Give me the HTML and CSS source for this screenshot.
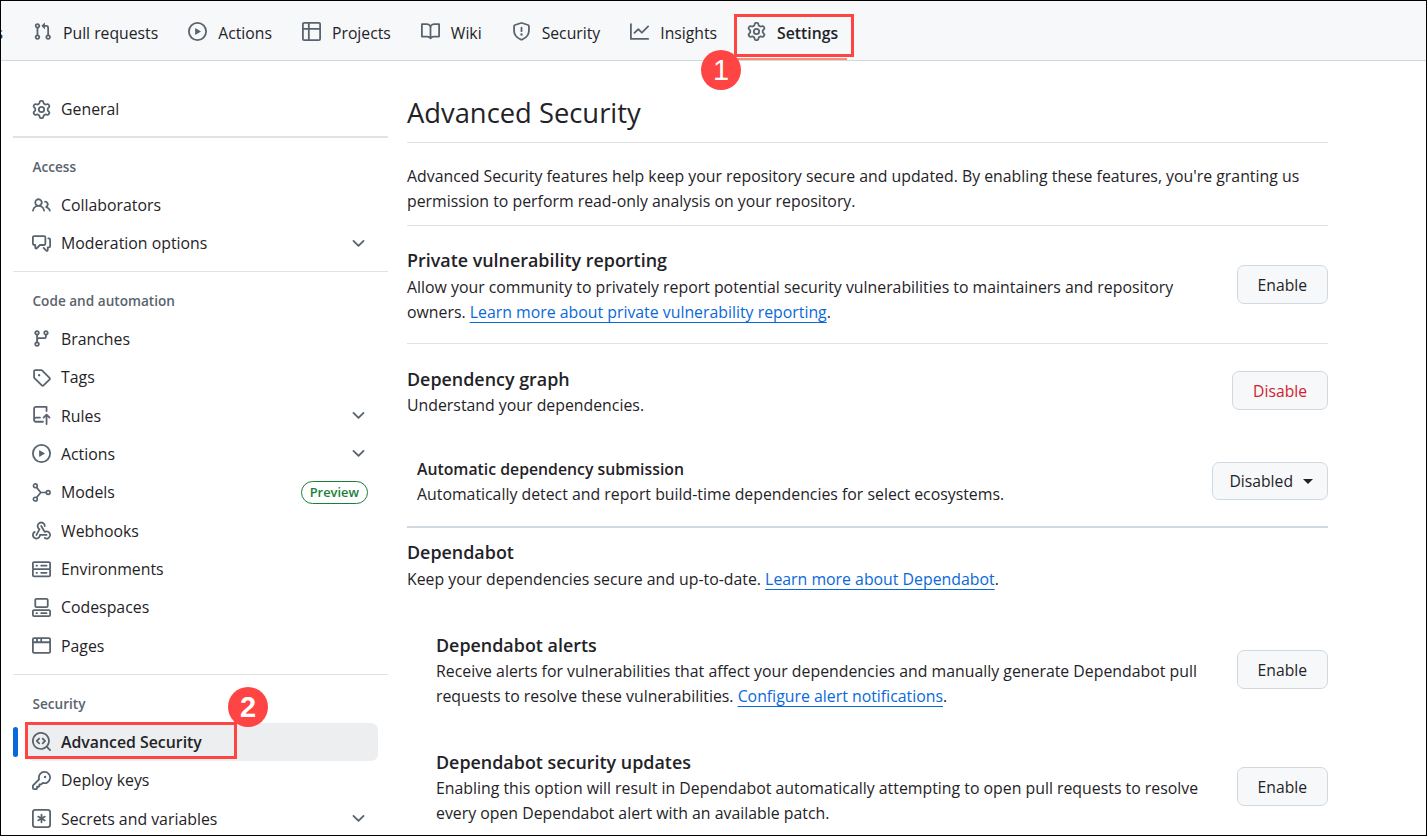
FILE: index.html
```html
<!DOCTYPE html>
<html lang="en">
<head>
  <meta charset="UTF-8">
  <meta name="viewport" content="width=device-width, initial-scale=1.0">
  <title>Advanced Security</title>
  <link rel="stylesheet" href="styles.css">
</head>
<body>
  <svg class="sprite" xmlns="http://www.w3.org/2000/svg">
    <symbol id="i-pull" viewBox="0 0 16 16"><path d="M1.5 3.25a2.25 2.25 0 1 1 3 2.122v5.256a2.251 2.251 0 1 1-1.5 0V5.372A2.25 2.25 0 0 1 1.5 3.25Zm5.677-.177L9.573.677A.25.25 0 0 1 10 .854V2.5h1A2.5 2.5 0 0 1 13.5 5v5.628a2.251 2.251 0 1 1-1.5 0V5a1 1 0 0 0-1-1h-1v1.646a.25.25 0 0 1-.427.177L7.177 3.427a.25.25 0 0 1 0-.354ZM3.75 2.5a.75.75 0 1 0 0 1.5.75.75 0 0 0 0-1.5Zm0 9.5a.75.75 0 1 0 0 1.5.75.75 0 0 0 0-1.5Zm8.25.75a.75.75 0 1 0 1.5 0 .75.75 0 0 0-1.5 0Z"/></symbol>
    <symbol id="i-play" viewBox="0 0 16 16"><path d="M8 0a8 8 0 1 1 0 16A8 8 0 0 1 8 0ZM1.5 8a6.5 6.5 0 1 0 13 0 6.5 6.5 0 0 0-13 0Zm4.879-2.773 4.264 2.559a.25.25 0 0 1 0 .428l-4.264 2.559A.25.25 0 0 1 6 10.559V5.442a.25.25 0 0 1 .379-.215Z"/></symbol>
    <symbol id="i-table" viewBox="0 0 16 16"><path d="M0 1.75C0 .784.784 0 1.75 0h12.5C15.216 0 16 .784 16 1.75v12.5A1.75 1.75 0 0 1 14.25 16H1.75A1.75 1.75 0 0 1 0 14.25ZM6.5 6.5v8h7.75a.25.25 0 0 0 .25-.25V6.5Zm8-1.5V1.75a.25.25 0 0 0-.25-.25H6.5V5Zm-13 1.5v7.75c0 .138.112.25.25.25H5v-8ZM5 5V1.5H1.75a.25.25 0 0 0-.25.25V5Z"/></symbol>
    <symbol id="i-book" viewBox="0 0 16 16"><path d="M0 1.75A.75.75 0 0 1 .75 1h4.253c1.227 0 2.317.59 3 1.501A3.743 3.743 0 0 1 11.006 1h4.245a.75.75 0 0 1 .75.75v10.5a.75.75 0 0 1-.75.75h-4.507a2.25 2.25 0 0 0-1.591.659l-.622.621a.75.75 0 0 1-1.06 0l-.622-.621A2.25 2.25 0 0 0 5.258 13H.75a.75.75 0 0 1-.75-.75Zm7.251 10.324.004-5.073-.002-2.253A2.25 2.25 0 0 0 5.003 2.5H1.5v9h3.757a3.75 3.75 0 0 1 1.994.574ZM8.755 4.75l-.004 7.322a3.752 3.752 0 0 1 1.992-.572H14.5v-9h-3.495a2.25 2.25 0 0 0-2.25 2.25Z"/></symbol>
    <symbol id="i-shield" viewBox="0 0 16 16"><path d="M7.467.133a1.748 1.748 0 0 1 1.066 0l5.25 1.68A1.75 1.75 0 0 1 15 3.48V7c0 1.566-.32 3.182-1.303 4.682-.983 1.498-2.585 2.813-5.032 3.855a1.697 1.697 0 0 1-1.33 0c-2.447-1.042-4.049-2.357-5.032-3.855C1.32 10.182 1 8.566 1 7V3.48a1.75 1.75 0 0 1 1.217-1.667Zm.61 1.429a.25.25 0 0 0-.153 0l-5.25 1.68a.25.25 0 0 0-.174.238V7c0 1.358.275 2.666 1.057 3.86.784 1.194 2.121 2.34 4.366 3.297a.196.196 0 0 0 .154 0c2.245-.956 3.582-2.104 4.366-3.298C13.225 9.666 13.5 8.36 13.5 7V3.48a.251.251 0 0 0-.174-.237l-5.25-1.68ZM8.75 4.75v3a.75.75 0 0 1-1.5 0v-3a.75.75 0 0 1 1.5 0ZM9 10.5a1 1 0 1 1-2 0 1 1 0 0 1 2 0Z"/></symbol>
    <symbol id="i-graph" viewBox="0 0 16 16"><path d="M1.5 1.75V13.5h13.75a.75.75 0 0 1 0 1.5H.75a.75.75 0 0 1-.75-.75V1.75a.75.75 0 0 1 1.5 0Zm14.28 2.53-5.25 5.25a.75.75 0 0 1-1.06 0L7 7.06 4.28 9.78a.751.751 0 0 1-1.042-.018.751.751 0 0 1-.018-1.042l3.25-3.25a.75.75 0 0 1 1.06 0L10 7.94l4.72-4.72a.751.751 0 0 1 1.042.018.751.751 0 0 1 .018 1.042Z"/></symbol>
    <symbol id="i-gear" viewBox="0 0 16 16"><path d="M8 0a8.2 8.2 0 0 1 .701.031C9.444.095 9.99.645 10.16 1.29l.288 1.107c.018.066.079.158.212.224.231.114.454.243.668.386.123.082.233.09.299.071l1.103-.303c.644-.176 1.392.021 1.82.63.27.385.506.792.704 1.218.315.675.111 1.422-.364 1.891l-.814.806c-.049.048-.098.147-.088.294.016.257.016.515 0 .772-.01.147.038.246.088.294l.814.806c.475.469.679 1.216.364 1.891a7.977 7.977 0 0 1-.704 1.217c-.428.61-1.176.807-1.82.63l-1.102-.302c-.067-.019-.177-.011-.3.071a5.909 5.909 0 0 1-.668.386c-.133.066-.194.158-.211.224l-.29 1.106c-.168.646-.715 1.196-1.458 1.26a8.006 8.006 0 0 1-1.402 0c-.743-.064-1.289-.614-1.458-1.26l-.289-1.106c-.018-.066-.079-.158-.212-.224a5.738 5.738 0 0 1-.668-.386c-.123-.082-.233-.09-.299-.071l-1.103.303c-.644.176-1.392-.021-1.82-.63a8.12 8.12 0 0 1-.704-1.218c-.315-.675-.111-1.422.363-1.891l.815-.806c.05-.048.098-.147.088-.294a6.214 6.214 0 0 1 0-.772c.01-.147-.038-.246-.088-.294l-.815-.806C.635 6.045.431 5.298.746 4.623a7.92 7.92 0 0 1 .704-1.217c.428-.61 1.176-.807 1.82-.63l1.102.302c.067.019.177.011.3-.071.214-.143.437-.272.668-.386.133-.066.194-.158.211-.224l.29-1.106C6.009.645 6.556.095 7.299.03 7.53.01 7.764 0 8 0Zm-.571 1.525c-.036.003-.108.036-.137.146l-.289 1.105c-.147.561-.549.967-.998 1.189-.173.086-.34.183-.5.29-.417.278-.97.423-1.529.27l-1.103-.303c-.109-.03-.175.016-.195.045-.22.312-.412.644-.573.99-.014.031-.021.11.059.19l.815.806c.411.406.562.957.53 1.456a4.709 4.709 0 0 0 0 .582c.032.499-.119 1.05-.53 1.456l-.815.806c-.081.08-.073.159-.059.19.162.346.353.677.573.989.02.03.085.076.195.046l1.102-.303c.56-.153 1.113-.008 1.53.27.161.107.328.204.501.29.447.222.85.629.997 1.189l.289 1.105c.029.109.101.143.137.146a6.6 6.6 0 0 0 1.142 0c.036-.003.108-.036.137-.146l.289-1.105c.147-.561.549-.967.998-1.189.173-.086.34-.183.5-.29.417-.278.97-.423 1.529-.27l1.103.303c.109.029.175-.016.195-.045.22-.313.411-.644.573-.99.014-.031.021-.11-.059-.19l-.815-.806c-.411-.406-.562-.957-.53-1.456a4.709 4.709 0 0 0 0-.582c-.032-.499.119-1.05.53-1.456l.815-.806c.081-.08.073-.159.059-.19a6.464 6.464 0 0 0-.573-.989c-.02-.03-.085-.076-.195-.046l-1.102.303c-.56.153-1.113.008-1.53-.27a4.44 4.44 0 0 0-.501-.29c-.447-.222-.85-.629-.997-1.189l-.289-1.105c-.029-.11-.101-.143-.137-.146a6.6 6.6 0 0 0-1.142 0ZM11 8a3 3 0 1 1-6 0 3 3 0 0 1 6 0ZM9.5 8a1.5 1.5 0 1 0-3.001.001A1.5 1.5 0 0 0 9.5 8Z"/></symbol>
    <symbol id="i-people" viewBox="0 0 16 16"><path d="M2 5.5a3.5 3.5 0 1 1 5.898 2.549 5.508 5.508 0 0 1 3.034 4.084.75.75 0 1 1-1.482.235 4 4 0 0 0-7.9 0 .75.75 0 0 1-1.482-.236A5.507 5.507 0 0 1 3.102 8.05 3.493 3.493 0 0 1 2 5.5ZM11 4a3.001 3.001 0 0 1 2.22 5.018 5.01 5.01 0 0 1 2.56 3.012.749.749 0 0 1-.885.954.752.752 0 0 1-.549-.514 3.507 3.507 0 0 0-2.522-2.372.75.75 0 0 1-.574-.73v-.352a.75.75 0 0 1 .416-.672A1.5 1.5 0 0 0 11 5.5.75.75 0 0 1 11 4Zm-5.5-.5a2 2 0 1 0-.001 3.999A2 2 0 0 0 5.5 3.5Z"/></symbol>
    <symbol id="i-comments" viewBox="0 0 16 16"><path d="M1.75 1h8.5c.966 0 1.75.784 1.75 1.75v5.5A1.75 1.75 0 0 1 10.25 10H7.061l-2.574 2.573A1.458 1.458 0 0 1 2 11.543V10h-.25A1.75 1.75 0 0 1 0 8.25v-5.5C0 1.784.784 1 1.75 1ZM1.5 2.75v5.5c0 .138.112.25.25.25h1a.75.75 0 0 1 .75.75v2.19l2.72-2.72a.749.749 0 0 1 .53-.22h3.5a.25.25 0 0 0 .25-.25v-5.5a.25.25 0 0 0-.25-.25h-8.5a.25.25 0 0 0-.25.25Zm13 2a.25.25 0 0 0-.25-.25h-.5a.75.75 0 0 1 0-1.5h.5c.966 0 1.75.784 1.75 1.75v5.5A1.75 1.75 0 0 1 14.25 12H14v1.543a1.458 1.458 0 0 1-2.487 1.03L9.22 12.28a.749.749 0 0 1 .326-1.275.749.749 0 0 1 .734.215l2.22 2.22v-2.19a.75.75 0 0 1 .75-.75h1a.25.25 0 0 0 .25-.25Z"/></symbol>
    <symbol id="i-chevron" viewBox="0 0 16 16"><path d="M12.78 5.22a.749.749 0 0 1 0 1.06l-4.25 4.25a.749.749 0 0 1-1.06 0L3.22 6.28a.749.749 0 1 1 1.06-1.06L8 8.939l3.72-3.719a.749.749 0 0 1 1.06 0Z"/></symbol>
    <symbol id="i-branch" viewBox="0 0 16 16"><path d="M9.5 3.25a2.25 2.25 0 1 1 3 2.122V6A2.5 2.5 0 0 1 10 8.5H6a1 1 0 0 0-1 1v1.128a2.251 2.251 0 1 1-1.5 0V5.372a2.25 2.25 0 1 1 1.5 0v1.836A2.493 2.493 0 0 1 6 7h4a1 1 0 0 0 1-1v-.628A2.25 2.25 0 0 1 9.5 3.25Zm-6 0a.75.75 0 1 0 1.5 0 .75.75 0 0 0-1.5 0Zm8.25-.75a.75.75 0 1 0 0 1.5.75.75 0 0 0 0-1.5ZM4.25 12a.75.75 0 1 0 0 1.5.75.75 0 0 0 0-1.5Z"/></symbol>
    <symbol id="i-tag" viewBox="0 0 16 16"><path d="M1 7.775V2.75C1 1.784 1.784 1 2.75 1h5.025c.464 0 .91.184 1.238.513l6.25 6.25a1.75 1.75 0 0 1 0 2.474l-5.026 5.026a1.75 1.75 0 0 1-2.474 0l-6.25-6.25A1.75 1.75 0 0 1 1 7.775Zm1.5 0c0 .066.026.13.073.177l6.25 6.25a.25.25 0 0 0 .354 0l5.025-5.025a.25.25 0 0 0 0-.354l-6.25-6.25a.25.25 0 0 0-.177-.073H2.75a.25.25 0 0 0-.25.25ZM6 5a1 1 0 1 1 0 2 1 1 0 0 1 0-2Z"/></symbol>
    <symbol id="i-rules" viewBox="0 0 16 16"><path d="M1 2.5A2.5 2.5 0 0 1 3.5 0h8.75a.75.75 0 0 1 .75.75v3.5a.75.75 0 0 1-1.5 0V1.5h-8a1 1 0 0 0-1 1v6.708A2.493 2.493 0 0 1 3.5 9h3.25a.75.75 0 0 1 0 1.5H3.5a1 1 0 0 0 0 2h5.75a.75.75 0 0 1 0 1.5H3.5A2.5 2.5 0 0 1 1 11.5Zm13.23 7.79h-.001l-1.224-1.224v6.184a.75.75 0 0 1-1.5 0V9.066L10.28 10.29a.75.75 0 0 1-1.06-1.061l2.505-2.504a.75.75 0 0 1 1.06 0L15.29 9.23a.751.751 0 0 1-.018 1.042.751.751 0 0 1-1.042.018Z"/></symbol>
    <symbol id="i-models" viewBox="0 0 16 16"><g fill="none" stroke="currentColor" stroke-width="1.4"><circle cx="2.8" cy="2.4" r="1.6"/><circle cx="2.8" cy="13.6" r="1.6"/><circle cx="13.6" cy="8" r="1.6"/><path d="M3.8 3.7 7.4 8l-3.6 4.3M7.4 8H12"/></g></symbol>
    <symbol id="i-webhook" viewBox="0 0 16 16"><path d="M5.5 4.25a2.25 2.25 0 0 1 4.5 0 .75.75 0 0 0 1.5 0 3.75 3.75 0 1 0-6.14 2.889l-2.272 4.258a.75.75 0 0 0 1.324.706L7 7.25a.75.75 0 0 0-.309-1.015A2.25 2.25 0 0 1 5.5 4.25Z"/><path d="M7.364 3.607a.75.75 0 0 1 1.03.257l2.608 4.349a3.75 3.75 0 1 1-.628 6.785.75.75 0 0 1 .752-1.299 2.25 2.25 0 1 0-.033-3.88.75.75 0 0 1-1.03-.256L7.107 4.636a.75.75 0 0 1 .257-1.03Z"/><path d="M2.9 8.776A.75.75 0 0 1 2.625 9.8 2.25 2.25 0 1 0 6 11.75a.75.75 0 0 1 .75-.751h5.5a.75.75 0 0 1 0 1.5H7.425a3.751 3.751 0 1 1-5.55-3.998.75.75 0 0 1 1.024.274Z"/></symbol>
    <symbol id="i-server" viewBox="0 0 16 16"><path d="M1.75 1h12.5c.966 0 1.75.784 1.75 1.75v4c0 .372-.116.717-.314 1 .198.283.314.628.314 1v4a1.75 1.75 0 0 1-1.75 1.75H1.75A1.75 1.75 0 0 1 0 12.75v-4c0-.358.109-.707.314-1a1.739 1.739 0 0 1-.314-1v-4C0 1.784.784 1 1.75 1ZM1.5 2.75v4c0 .138.112.25.25.25h12.5a.25.25 0 0 0 .25-.25v-4a.25.25 0 0 0-.25-.25H1.75a.25.25 0 0 0-.25.25Zm.25 5.75a.25.25 0 0 0-.25.25v4c0 .138.112.25.25.25h12.5a.25.25 0 0 0 .25-.25v-4a.25.25 0 0 0-.25-.25ZM7 4.75A.75.75 0 0 1 7.75 4h4.5a.75.75 0 0 1 0 1.5h-4.5A.75.75 0 0 1 7 4.75ZM7.75 10h4.5a.75.75 0 0 1 0 1.5h-4.5a.75.75 0 0 1 0-1.5ZM3 4.75A.75.75 0 0 1 3.75 4h.5a.75.75 0 0 1 0 1.5h-.5A.75.75 0 0 1 3 4.75ZM3.75 10h.5a.75.75 0 0 1 0 1.5h-.5a.75.75 0 0 1 0-1.5Z"/></symbol>
    <symbol id="i-codespaces" viewBox="0 0 16 16"><path d="M0 11.25c0-.966.784-1.75 1.75-1.75h12.5c.966 0 1.75.784 1.75 1.75v3A1.75 1.75 0 0 1 14.25 16H1.75A1.75 1.75 0 0 1 0 14.25Zm2-9.5C2 .784 2.784 0 3.75 0h8.5C13.216 0 14 .784 14 1.75v5a1.75 1.75 0 0 1-1.75 1.75h-8.5A1.75 1.75 0 0 1 2 6.75Zm1.75-.25a.25.25 0 0 0-.25.25v5c0 .138.112.25.25.25h8.5a.25.25 0 0 0 .25-.25v-5a.25.25 0 0 0-.25-.25Zm-2 9.5a.25.25 0 0 0-.25.25v3c0 .138.112.25.25.25h12.5a.25.25 0 0 0 .25-.25v-3a.25.25 0 0 0-.25-.25Z"/><path d="M7 12.75a.75.75 0 0 1 .75-.75h4.5a.75.75 0 0 1 0 1.5h-4.5a.75.75 0 0 1-.75-.75Zm-4 0a.75.75 0 0 1 .75-.75h.5a.75.75 0 0 1 0 1.5h-.5a.75.75 0 0 1-.75-.75Z"/></symbol>
    <symbol id="i-browser" viewBox="0 0 16 16"><path d="M0 2.75C0 1.784.784 1 1.75 1h12.5c.966 0 1.75.784 1.75 1.75v10.5A1.75 1.75 0 0 1 14.25 15H1.75A1.75 1.75 0 0 1 0 13.25ZM14.5 6h-13v7.25c0 .138.112.25.25.25h12.5a.25.25 0 0 0 .25-.25Zm-6-3.5v2h6V2.75a.25.25 0 0 0-.25-.25ZM5 2.5v2h2v-2Zm-3.25 0a.25.25 0 0 0-.25.25V4.5h2v-2Z"/></symbol>
    <symbol id="i-codescan" viewBox="0 0 16 16"><path d="M8.47 4.97a.75.75 0 0 0 0 1.06L9.94 7.5 8.47 8.97a.75.75 0 1 0 1.06 1.06l2-2a.75.75 0 0 0 0-1.06l-2-2a.75.75 0 0 0-1.06 0ZM6.53 6.03a.75.75 0 0 0-1.06-1.06l-2 2a.75.75 0 0 0 0 1.06l2 2a.75.75 0 1 0 1.06-1.06L5.06 7.5l1.47-1.47Z"/><path d="M12.246 13.307a7.501 7.501 0 1 1 1.06-1.06l2.474 2.473a.749.749 0 0 1-.326 1.275.749.749 0 0 1-.734-.215ZM1.5 7.5a6.002 6.002 0 0 0 3.608 5.504 6.002 6.002 0 0 0 6.486-1.117.748.748 0 0 1 .292-.293A6 6 0 1 0 1.5 7.5Z"/></symbol>
    <symbol id="i-key" viewBox="0 0 16 16"><path d="M10.5 0a5.499 5.499 0 1 1-1.288 10.848l-.932.932a.749.749 0 0 1-.53.22H7v.75a.749.749 0 0 1-.22.53l-.5.5a.749.749 0 0 1-.53.22H5v.75a.749.749 0 0 1-.22.53l-.5.5a.749.749 0 0 1-.53.22h-2A1.75 1.75 0 0 1 0 14.25v-2c0-.199.079-.389.22-.53l4.932-4.932A5.5 5.5 0 0 1 10.5 0Zm-4 5.5c-.001.431.069.86.205 1.269a.75.75 0 0 1-.181.768L1.5 12.56v1.69c0 .138.112.25.25.25h1.69l.06-.06v-1.19a.75.75 0 0 1 .75-.75h1.19l.06-.06v-1.19a.75.75 0 0 1 .75-.75h1.19l1.023-1.025a.75.75 0 0 1 .768-.18A4 4 0 1 0 6.5 5.5ZM11 6a1 1 0 1 1 0-2 1 1 0 0 1 0 2Z"/></symbol>
    <symbol id="i-asterisk" viewBox="0 0 16 16"><path d="M0 2.75A2.75 2.75 0 0 1 2.75 0h10.5A2.75 2.75 0 0 1 16 2.75v10.5A2.75 2.75 0 0 1 13.25 16H2.75A2.75 2.75 0 0 1 0 13.25ZM2.75 1.5c-.69 0-1.25.56-1.25 1.25v10.5c0 .69.56 1.25 1.25 1.25h10.5c.69 0 1.25-.56 1.25-1.25V2.75c0-.69-.56-1.25-1.25-1.25Z"/><path d="M8 4a.75.75 0 0 1 .75.75V6.7l1.69-.975a.75.75 0 0 1 .75 1.3L9.5 8l1.69.976a.75.75 0 0 1-.75 1.298L8.75 9.3v1.951a.75.75 0 0 1-1.5 0V9.299l-1.69.975a.75.75 0 0 1-.75-1.298L6.5 8l-1.69-.975a.75.75 0 0 1 .75-1.3l1.69.976V4.75A.75.75 0 0 1 8 4Z"/></symbol>
  </svg>

  <div class="frame">
    <nav class="tabs">
      <span class="tab-cut">s</span>
      <a class="tab"><svg class="icon"><use href="#i-pull"/></svg>Pull requests</a>
      <a class="tab"><svg class="icon"><use href="#i-play"/></svg>Actions</a>
      <a class="tab"><svg class="icon"><use href="#i-table"/></svg>Projects</a>
      <a class="tab"><svg class="icon"><use href="#i-book"/></svg>Wiki</a>
      <a class="tab"><svg class="icon"><use href="#i-shield"/></svg>Security</a>
      <a class="tab"><svg class="icon"><use href="#i-graph"/></svg>Insights</a>
      <a class="tab tab-current"><svg class="icon"><use href="#i-gear"/></svg>Settings</a>
    </nav>

    <div class="layout">
      <aside class="side">
        <ul class="side-list">
          <li class="side-item"><svg class="icon"><use href="#i-gear"/></svg>General</li>
        </ul>
        <div class="side-rule side-rule-first"></div>
        <h3 class="side-head">Access</h3>
        <ul class="side-list">
          <li class="side-item"><svg class="icon"><use href="#i-people"/></svg>Collaborators</li>
          <li class="side-item"><svg class="icon"><use href="#i-comments"/></svg>Moderation options<svg class="icon chevron"><use href="#i-chevron"/></svg></li>
        </ul>
        <div class="side-rule"></div>
        <h3 class="side-head">Code and automation</h3>
        <ul class="side-list">
          <li class="side-item"><svg class="icon"><use href="#i-branch"/></svg>Branches</li>
          <li class="side-item"><svg class="icon"><use href="#i-tag"/></svg>Tags</li>
          <li class="side-item"><svg class="icon"><use href="#i-rules"/></svg>Rules<svg class="icon chevron"><use href="#i-chevron"/></svg></li>
          <li class="side-item"><svg class="icon"><use href="#i-play"/></svg>Actions<svg class="icon chevron"><use href="#i-chevron"/></svg></li>
          <li class="side-item"><svg class="icon"><use href="#i-models"/></svg>Models<span class="pill">Preview</span></li>
          <li class="side-item"><svg class="icon"><use href="#i-webhook"/></svg>Webhooks</li>
          <li class="side-item"><svg class="icon"><use href="#i-server"/></svg>Environments</li>
          <li class="side-item"><svg class="icon"><use href="#i-codespaces"/></svg>Codespaces</li>
          <li class="side-item"><svg class="icon"><use href="#i-browser"/></svg>Pages</li>
        </ul>
        <div class="side-rule side-rule-last"></div>
        <h3 class="side-head">Security</h3>
        <ul class="side-list">
          <li class="side-item side-active"><svg class="icon"><use href="#i-codescan"/></svg>Advanced Security</li>
          <li class="side-item"><svg class="icon"><use href="#i-key"/></svg>Deploy keys</li>
          <li class="side-item"><svg class="icon"><use href="#i-asterisk"/></svg>Secrets and variables<svg class="icon chevron"><use href="#i-chevron"/></svg></li>
        </ul>
      </aside>

      <main class="content">
        <h1 class="page-title">Advanced Security</h1>
        <p class="intro">Advanced Security features help keep your repository secure and updated. By enabling these features, you're granting us<br>permission to perform read-only analysis on your repository.</p>

        <section class="row row-private">
          <div>
            <h2 class="row-title">Private vulnerability reporting</h2>
            <p class="row-text">Allow your community to privately report potential security vulnerabilities to maintainers and repository<br>owners. <a class="link">Learn more about private vulnerability reporting</a>.</p>
          </div>
          <button class="btn btn-enable">Enable</button>
        </section>

        <section class="row row-graph">
          <div>
            <h2 class="row-title">Dependency graph</h2>
            <p class="row-text">Understand your dependencies.</p>
          </div>
          <button class="btn btn-disable">Disable</button>
        </section>

        <section class="row row-submission">
          <div>
            <h2 class="row-title row-title-small">Automatic dependency submission</h2>
            <p class="row-text">Automatically detect and report build-time dependencies for select ecosystems.</p>
          </div>
          <button class="btn btn-menu">Disabled<span class="caret"></span></button>
        </section>

        <section class="dependabot">
          <h2 class="row-title">Dependabot</h2>
          <p class="row-text">Keep your dependencies secure and up-to-date. <a class="link">Learn more about Dependabot</a>.</p>
        </section>

        <section class="row row-alerts">
          <div>
            <h2 class="row-title">Dependabot alerts</h2>
            <p class="row-text">Receive alerts for vulnerabilities that affect your dependencies and manually generate Dependabot pull<br>requests to resolve these vulnerabilities. <a class="link">Configure alert notifications</a>.</p>
          </div>
          <button class="btn btn-enable">Enable</button>
        </section>

        <section class="row row-updates">
          <div>
            <h2 class="row-title">Dependabot security updates</h2>
            <p class="row-text">Enabling this option will result in Dependabot automatically attempting to open pull requests to resolve<br>every open Dependabot alert with an available patch.</p>
          </div>
          <button class="btn btn-enable">Enable</button>
        </section>
      </main>
    </div>

    <!-- callouts drawn over the screenshot -->
    <div class="mark mark-settings"></div>
    <div class="mark mark-advanced"></div>
    <div class="badge badge-one">1</div>
    <div class="badge badge-two">2</div>
  </div>
</body>
</html>
```

FILE: styles.css
```css
* {
  box-sizing: border-box;
}
body {
  margin: 0;
  background: #fff;
  font-family: "Open Sans", "Noto Sans", sans-serif;
  font-size: 15.85px;
  color: #1f2328;
}
.sprite {
  display: none;
}
.icon {
  width: 19px;
  height: 19px;
  flex: none;
  fill: #59636e;
  color: #59636e;
}
.frame {
  position: relative;
  width: 1427px;
  height: 836px;
  border: 1px solid #000;
  overflow: hidden;
}

/* top tabs */
.tabs {
  display: flex;
  align-items: center;
  gap: 30px;
  height: 60px;
  padding-top: 4px;
  background: #f6f8fa;
  border-bottom: 1px solid #d1d9e0;
  font-size: 15.75px;
}
.tab-cut {
  display: flex;
  justify-content: flex-end;
  width: 2px;
  overflow: hidden;
}
.tab {
  position: relative;
  display: flex;
  align-items: center;
  gap: 11px;
  white-space: nowrap;
}
.tab .icon {
  margin-bottom: 3px;
}
.tab-current {
  font-weight: 600;
}
.tab-current::after {
  content: "";
  position: absolute;
  left: -10px;
  right: -9px;
  bottom: -16px;
  height: 2px;
  background: #fd8c73;
}

.layout {
  display: flex;
}

/* sidebar */
.side {
  flex: none;
  width: 375px;
  margin-left: 12px;
  padding-top: 29px;
}
.side-list {
  list-style: none;
  margin: 0 10px 0 14px;
  padding: 0;
}
.side-item {
  position: relative;
  display: flex;
  align-items: center;
  gap: 10px;
  height: 38.4px;
  padding: 0 10px 0 5px;
  border-radius: 7px;
  white-space: nowrap;
}
.side-active {
  background: #eceef0;
  font-weight: 600;
}
.side-active::before {
  content: "";
  position: absolute;
  left: -14px;
  top: 4px;
  width: 5px;
  height: 30px;
  border-radius: 3px;
  background: #0969da;
}
.chevron {
  margin-left: auto;
}
.pill {
  margin-left: auto;
  height: 23px;
  padding: 0 8px;
  border: 1px solid #1a7f37;
  border-radius: 12px;
  font-size: 12.9px;
  font-weight: 600;
  line-height: 20px;
  color: #1a7f37;
}
.side-rule {
  height: 1px;
  margin-top: 8.4px;
  background: #dfe3e8;
}
.side-rule-first {
  height: 2px;
  margin-top: 8px;
}
.side-rule-last {
  margin-top: 9px;
}
.side-head {
  height: 47.5px;
  margin: 0;
  padding: 19px 0 0 19.5px;
  font-size: 13.6px;
  font-weight: 600;
  line-height: 20px;
  color: #59636e;
}

/* main column */
.content {
  flex: none;
  width: 921px;
  margin-left: 19px;
  padding-top: 29px;
}
.page-title {
  height: 53px;
  margin: 0;
  border-bottom: 1px solid #dfe3e8;
  font-size: 27.35px;
  font-weight: 400;
  line-height: 46px;
}
.intro {
  margin: 0;
  padding: 21px 0 11px;
  border-bottom: 1px solid #dfe3e8;
  line-height: 25px;
}
.row {
  display: flex;
  justify-content: space-between;
  align-items: flex-start;
}
.row-title {
  margin: 0;
  font-size: 17.9px;
  font-weight: 600;
  line-height: 27px;
}
.row-title-small {
  font-size: 15.8px;
  line-height: 25px;
}
.row-text {
  margin: 0;
  line-height: 25px;
}
.link {
  color: #0969da;
  text-decoration: underline;
  text-underline-offset: 4px;
}
.row-private {
  padding: 21px 0 18px;
  border-bottom: 1px solid #dfe3e8;
}
.row-private .row-title {
  margin-bottom: 1px;
}
.row-private .btn {
  margin-top: 18px;
}
.row-graph {
  padding-top: 22px;
}
.row-graph .btn {
  margin-top: 5px;
}
.row-submission {
  padding: 39px 0 19px 10px;
  border-bottom: 2px solid #d1d9e0;
}
.row-submission .btn {
  margin-top: 5px;
}
.dependabot {
  padding-top: 11px;
}
.dependabot .row-title {
  margin-bottom: 1px;
}
.row-alerts,
.row-updates {
  padding: 40px 0 0 29px;
}
.row-alerts .btn,
.row-updates .btn {
  margin-top: 18px;
}

.btn {
  display: flex;
  align-items: center;
  height: 39px;
  padding: 0 20px;
  background: #f6f8fa;
  border: 1px solid #d1d9e0;
  border-radius: 7px;
  font-family: inherit;
  font-size: 15.7px;
  font-weight: 500;
  color: #1f2328;
}
.btn-disable {
  color: #cf222e;
}
.btn-menu {
  height: 38px;
  padding: 0 14px 0 16px;
}
.caret {
  width: 0;
  height: 0;
  margin-left: 10px;
  border: 5px solid transparent;
  border-top-color: #1f2328;
  border-bottom-width: 0;
}

/* red callouts */
.mark {
  position: absolute;
  border: 3px solid #ff4444;
}
.mark-settings {
  left: 733px;
  top: 13px;
  width: 120px;
  height: 43px;
}
.mark-advanced {
  left: 24px;
  top: 721px;
  width: 212px;
  height: 37px;
}
.badge {
  position: absolute;
  width: 40px;
  height: 40px;
  border-radius: 50%;
  background: #ff4444;
  color: #fff;
  font-family: "Liberation Sans", sans-serif;
  font-size: 29px;
  line-height: 40px;
  text-align: center;
}
.badge-one {
  left: 700px;
  top: 49px;
}
.badge-two {
  left: 227px;
  top: 686px;
  font-weight: 700;
}
```
